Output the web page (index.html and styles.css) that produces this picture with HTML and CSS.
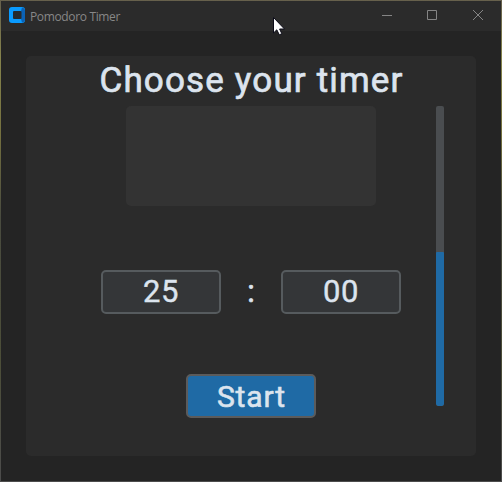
FILE: index.html
```html
<!DOCTYPE html>
<html lang="en">
<head>
<meta charset="utf-8">
<title>Pomodoro Timer</title>
<link rel="stylesheet" href="styles.css">
</head>
<body>
<div class="window">
  <header class="titlebar">
    <svg class="logo" width="16" height="16" viewBox="0 0 16 16">
      <rect width="16" height="16" rx="3" fill="#0a9bff"/>
      <path fill="#0b62b5" d="M12 4l1-3.5q3 .5 3 3v9q0 2.500-3 3l-1-3.500z"/>
      <rect x="4" y="4" width="8.500" height="8" rx="1" fill="#252a2e"/>
    </svg>
    <span class="caption">Pomodoro Timer</span>
    <div class="controls">
      <svg width="46" height="30" viewBox="0 0 46 30"><path d="M18 14.500h10"/></svg>
      <svg width="46" height="30" viewBox="0 0 46 30"><path d="M17.500 9.500h9v9h-9z"/></svg>
      <svg width="46" height="30" viewBox="0 0 46 30"><path d="M17 9l10 10M27 9L17 19"/></svg>
    </div>
  </header>
  <main class="panel">
    <div class="content">
      <h1 class="heading">Choose your timer</h1>
      <div class="preview"></div>
      <div class="time">
        <div class="field">25</div>
        <div class="colon">:</div>
        <div class="field">00</div>
      </div>
      <button class="start">Start</button>
    </div>
    <div class="track"><div class="thumb"></div></div>
  </main>
</div>
<svg class="cursor" width="14" height="21" viewBox="0 0 14 21">
  <path d="M.5 1.500v15.500l3.300-3.200 2.500 5 2.500-1.100-2.200-4.700h4.900z" fill="#fff" stroke="#0b0b18" stroke-width="1"/>
</svg>
</body>
</html>
```
FILE: styles.css
```css
* { box-sizing: border-box; }
body {
  margin: 0;
  width: 502px;
  height: 482px;
  padding: 1px;
  overflow: hidden;
  background: linear-gradient(180deg, #66604c 0, #85834c 12%, #74703f 28%, #494b3f 45%, #4c4e38 75%, #4c4c4c 100%);
  font-family: Roboto, "Liberation Sans", sans-serif;
  color: #dce4ee;
}
.window { width: 500px; height: 480px; background: #242424; }
.titlebar {
  display: flex;
  align-items: center;
  height: 30px;
  padding-left: 8px;
  background: #2b2b2b;
}
.logo { margin-top: -2px; }
.caption {
  margin: 0 0 0 5px;
  font: 12px "Open Sans", "Noto Sans", sans-serif;
  letter-spacing: -0.35px;
  color: #878787;
  white-space: nowrap;
}
.controls { display: flex; margin: 0 -1px 0 auto; }
.controls svg { display: block; fill: none; stroke: #858585; }
.panel {
  display: flex;
  width: 450px;
  height: 400px;
  margin: 25px;
  border-radius: 5px;
  background: #2b2b2b;
}
.content {
  display: flex;
  flex-direction: column;
  align-items: center;
  width: 450px;
  flex: none;
}
.heading {
  height: 50px;
  margin: 0;
  padding-left: 1px;
  font-size: 35px;
  font-weight: 400;
  line-height: 49px;
  letter-spacing: 1.15px;
  -webkit-text-stroke: 0.7px #dce4ee;
  white-space: nowrap;
}
.preview { width: 250px; height: 100px; border-radius: 5px; background: #333; }
.time { display: flex; margin-top: 64px; }
.field {
  width: 120px;
  height: 44px;
  border: 2px solid #565b5e;
  border-radius: 5px;
  background: #343638;
  font-size: 31px;
  line-height: 40px;
  letter-spacing: 0.5px;
  -webkit-text-stroke: 0.4px #dce4ee;
  text-align: center;
}
.colon { width: 60px; font-size: 31px; line-height: 44px; -webkit-text-stroke: 0.7px #dce4ee; text-align: center; }
.start {
  width: 130px;
  height: 44px;
  margin-top: 60px;
  padding: 0 0 0 1px;
  border: 2px solid #5b5b5b;
  border-radius: 5px;
  background: #1f6aa5;
  color: #dce4ee;
  font: 400 30px/42px Roboto, sans-serif;
  letter-spacing: 0.9px;
  -webkit-text-stroke: 0.6px #dce4ee;
}
.track {
  display: flex;
  flex: none;
  align-items: flex-end;
  width: 8px;
  height: 300px;
  margin: 50px 0 0 -40px;
  border-radius: 2px;
  background: #4a4d50;
  overflow: hidden;
}
.thumb { width: 8px; height: 154px; border-radius: 1px 1px 2px 2px; background: #1f6aa5; }
.cursor { position: absolute; left: 273px; top: 16px; }
```
